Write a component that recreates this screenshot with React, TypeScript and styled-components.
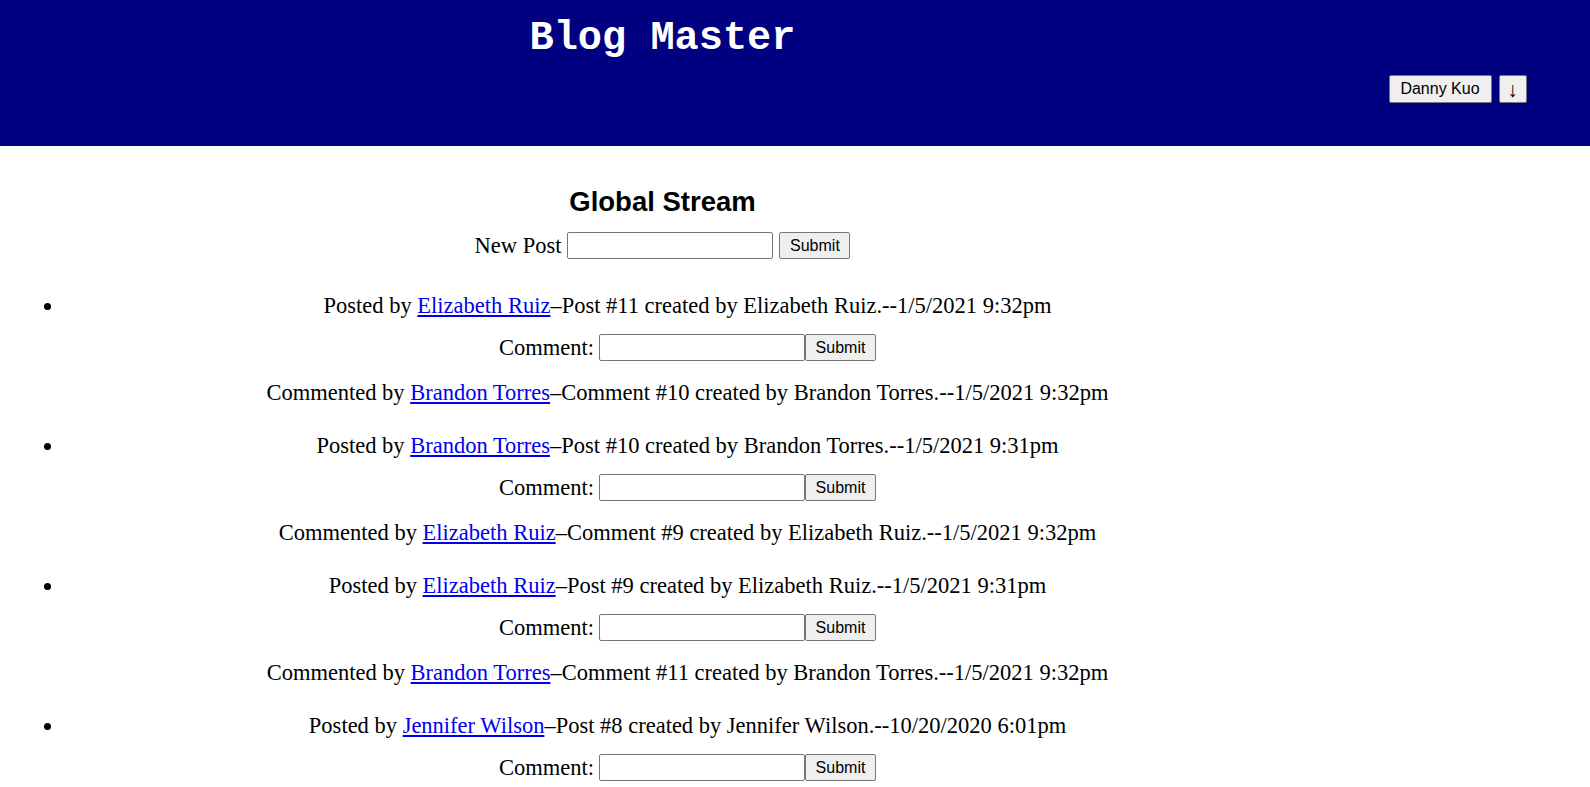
import React from "react";
import styled, { createGlobalStyle } from "styled-components";

const Global = createGlobalStyle`
  html, body { margin: 0; padding: 0; background: #fff; }
  body { font-family: "Liberation Serif", "Times New Roman", serif; font-size: 22.5px; color: #000; }
`;

const Header = styled.header`
  display: grid;
  grid-template-columns: 5fr 1fr;
  height: 146px;
  background: #000080;
`;

const Title = styled.h1`
  margin: 0;
  padding-top: 16px;
  text-align: center;
  font-family: "Liberation Mono", "Courier New", monospace;
  font-weight: bold;
  font-size: 40.3px;
  line-height: 45px;
  color: #fff;
`;

const UserBox = styled.div`
  display: flex;
  justify-content: center;
  align-items: flex-start;
  gap: 7px;
  padding-top: 75px;
`;

const Btn = styled.button<{ $square?: boolean }>`
  box-sizing: border-box;
  height: 28px;
  padding: 0 ${(p) => (p.$square ? "0" : "10px")};
  width: ${(p) => (p.$square ? "28px" : "103px")};
  font-family: "Liberation Sans", Arial, sans-serif;
  font-size: ${(p) => (p.$square ? "21px" : "16px")};
  line-height: 1;
  color: #000;
  background: #efefef;
  border: 1px solid #767676;
  border-radius: 2px;
  cursor: pointer;
`;

const Main = styled.main`
  width: calc(100% * 5 / 6);
  text-align: center;
`;

const Heading = styled.h2`
  margin: 40px 0 0;
  font-family: "Liberation Sans", Arial, sans-serif;
  font-weight: bold;
  font-size: 27.5px;
  line-height: 32px;
`;

const Row = styled.form<{ $gap: number }>`
  display: flex;
  justify-content: center;
  align-items: center;
  height: 27px;
  gap: ${(p) => p.$gap}px;
`;

const NewPostRow = styled(Row)`
  margin-top: 14px;
`;

const CommentRow = styled(Row)`
  margin-top: 15px;
`;

const Label = styled.label`
  font-size: 22.5px;
  line-height: 26px;
`;

const TextInput = styled.input`
  box-sizing: border-box;
  width: 206px;
  height: 27px;
  padding: 1px 2px;
  font-size: 16px;
  border: 1px solid #767676;
  border-radius: 2px;
  background: #fff;
`;

const SubmitBtn = styled.button`
  box-sizing: border-box;
  height: 27px;
  width: 71px;
  padding: 0;
  font-family: "Liberation Sans", Arial, sans-serif;
  font-size: 16px;
  color: #000;
  background: #efefef;
  border: 1px solid #767676;
  border-radius: 2px;
`;

const CommentWrap = styled.span`
  display: flex;
  align-items: center;
`;

const PostList = styled.ul`
  margin: 34px 0 0;
  padding: 0 14px 0 64px;
  list-style: disc;
`;

const PostItem = styled.li`
  margin-bottom: 27px;
`;

const Line = styled.div<{ $top?: number }>`
  line-height: 26px;
  margin-top: ${(p) => p.$top ?? 0}px;
`;

const Link = styled.a`
  color: #0000ee;
  text-decoration: underline;
`;

type Comment = { author: string; text: string };
type Post = { author: string; text: string; comments: Comment[] };

const posts: Post[] = [
  {
    author: "Elizabeth Ruiz",
    text: "Post #11 created by Elizabeth Ruiz.--1/5/2021 9:32pm",
    comments: [{ author: "Brandon Torres", text: "Comment #10 created by Brandon Torres.--1/5/2021 9:32pm" }],
  },
  {
    author: "Brandon Torres",
    text: "Post #10 created by Brandon Torres.--1/5/2021 9:31pm",
    comments: [{ author: "Elizabeth Ruiz", text: "Comment #9 created by Elizabeth Ruiz.--1/5/2021 9:32pm" }],
  },
  {
    author: "Elizabeth Ruiz",
    text: "Post #9 created by Elizabeth Ruiz.--1/5/2021 9:31pm",
    comments: [{ author: "Brandon Torres", text: "Comment #11 created by Brandon Torres.--1/5/2021 9:32pm" }],
  },
  {
    author: "Jennifer Wilson",
    text: "Post #8 created by Jennifer Wilson.--10/20/2020 6:01pm",
    comments: [],
  },
];

export default function App() {
  return (
    <>
      <Global />
      <Header>
        <Title>Blog Master</Title>
        <UserBox>
          <Btn>Danny Kuo</Btn>
          <Btn $square>↓</Btn>
        </UserBox>
      </Header>
      <Main>
        <Heading>Global Stream</Heading>
        <NewPostRow $gap={6} onSubmit={(e) => e.preventDefault()}>
          <Label>New Post</Label>
          <TextInput type="text" />
          <SubmitBtn type="submit">Submit</SubmitBtn>
        </NewPostRow>
        <PostList>
          {posts.map((p, i) => (
            <PostItem key={i}>
              <Line>
                Posted by <Link href="#">{p.author}</Link>–{p.text}
              </Line>
              <CommentRow $gap={5} onSubmit={(e) => e.preventDefault()}>
                <Label>Comment:</Label>
                <CommentWrap>
                  <TextInput type="text" />
                  <SubmitBtn type="submit">Submit</SubmitBtn>
                </CommentWrap>
              </CommentRow>
              {p.comments.map((c, j) => (
                <Line key={j} $top={19}>
                  Commented by <Link href="#">{c.author}</Link>–{c.text}
                </Line>
              ))}
            </PostItem>
          ))}
        </PostList>
      </Main>
    </>
  );
}
